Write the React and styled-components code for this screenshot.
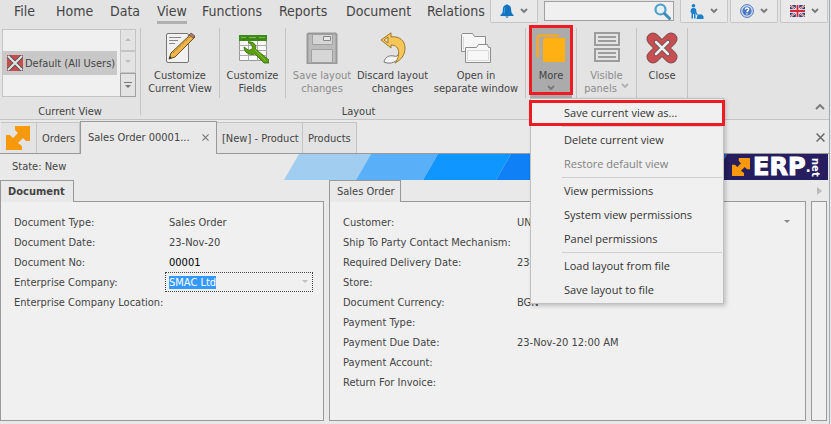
import React, { useEffect, useRef } from "react";
import styled, { createGlobalStyle, css } from "styled-components";

const GlobalStyle = createGlobalStyle`
  *, *::before, *::after { box-sizing: border-box; }
  body {
    margin: 0;
    background: #e9e9e9;
    color: #444;
    font: 11px/13px "DejaVu Sans Condensed", "DejaVu Sans", "Noto Sans", sans-serif;
  }
  button, input { font: inherit; color: inherit; margin: 0; padding: 0; border: 0; background: none; }
  button { cursor: pointer; }
  svg { display: block; flex: none; }
`;

const Window = styled.div`
  display: flex;
  flex-direction: column;
  min-height: 100vh;
  margin-right: 1px;
  border-right: 1px solid #a3a9b0;
`;

/* ---------- top bar ---------- */
const TopBar = styled.header`
  display: flex;
  align-items: flex-start;
  gap: 2px;
  height: 25px;
  padding-right: 1px;
  background: #e3e3e3;
`;

const MenuTabs = styled.nav`
  display: grid;
  grid-template-columns: 42px 54px 47px 45px 77px 67px 81px 61px;
  padding-left: 14px;
  font: 14px/21px "DejaVu Sans Condensed", "Noto Sans", sans-serif;
`;

const MenuTab = styled.button`
  justify-self: start;
  height: 24px;
  padding-top: 2px;
  line-height: 19px;
  white-space: nowrap;
  border-bottom: 3px solid ${(p) => (p.$active ? "#b0b0b0" : "transparent")};
`;

const ToolButton = styled.button`
  display: flex;
  flex: none;
  align-items: center;
  justify-content: center;
  gap: 6px;
  width: 48px;
  height: 23px;
  background: #e9e9e9;
  border: 1px solid #c6c6c6;
  border-top: 0;
  border-radius: 0 0 2px 2px;
`;

const SearchBox = styled.label`
  display: flex;
  flex: 1;
  align-items: center;
  min-width: 60px;
  height: 20px;
  margin: 1px 4px 0;
  padding-right: 2px;
  background: #f0f0f0;
  border: 1px solid #a0a0a0;
  input { flex: 1; width: 0; outline: 0; padding-left: 4px; }
`;

/* ---------- ribbon ---------- */
const Ribbon = styled.section`
  display: flex;
  height: 95px;
  background: #e3e3e3;
  border-bottom: 1px solid #c4c4c4;
`;

const Group = styled.div`
  position: relative;
  display: flex;
  flex-direction: column;
  width: ${(p) => p.$width}px;
`;

const GroupBody = styled.div`
  display: flex;
  height: 73px;
`;

const GroupLabel = styled.div`
  padding-top: 7px;
  text-align: center;
`;

const Divider = styled.div`
  flex: none;
  width: 1px;
  height: ${(p) => (p.$tall ? 87 : 70)}px;
  margin-top: 3px;
  background: #c4c4c4;
`;

const Gallery = styled.div`
  display: flex;
  flex: 1;
  height: 68px;
  margin: 4px 4px 0 2px;
  background: #f0f0f0;
  border: 1px solid #c4c4c4;
`;

const GalleryItem = styled.button`
  display: flex;
  align-items: center;
  gap: 2px;
  width: 114px;
  height: 24px;
  margin-top: 21px;
  padding-left: 4px;
  white-space: nowrap;
  background: #c8c8c8;
`;

const GallerySteps = styled.div`
  display: grid;
  grid-template-rows: 22px 22px 24px;
  width: 16px;
  margin: -1px -1px -1px auto;
`;

const GalleryStep = styled.button`
  display: grid;
  place-items: center;
  background: #e3e3e3;
  border: 1px solid ${(p) => (p.$strong ? "#a0a0a0" : "#c4c4c4")};
`;

const BigButton = styled.button`
  position: relative;
  display: flex;
  flex-direction: column;
  align-items: center;
  width: ${(p) => p.$width}px;
  height: 73px;
  padding-top: 7px;
  white-space: nowrap;
  background: ${(p) => (p.$pressed ? "#ababab" : "none")};
  color: ${(p) => (p.$muted ? "#8c8c8c" : "inherit")};
  svg:first-child { margin-bottom: 5px; }
`;

const highlight = css`
  &::after {
    content: "";
    position: absolute;
    inset: 0 -1px 3px -1px;
    border: 3px solid #ed1c24;
    pointer-events: none;
  }
`;

const MoreButton = styled(BigButton)`
  ${highlight}
  svg:last-child { margin-top: 3px; }
`;

const PanelsCaption = styled.span`
  display: flex;
  align-items: center;
  gap: 4px;
`;

const MoreSlot = styled.div`
  position: relative;
  margin: 0 4px;
`;

const Menu = styled.div`
  position: absolute;
  z-index: 2;
  top: 73px;
  left: 0;
  width: 194px;
  padding: 2px 1px 1px;
  background: #f0f0f0;
  border: 1px solid #c0c0c0;
  box-shadow: 2px 2px 4px rgba(0, 0, 0, 0.2);
  font: 11px/24px "Open Sans", "Noto Sans", sans-serif;
`;

const MenuItem = styled.button`
  position: relative;
  display: block;
  width: 100%;
  height: 24px;
  padding-left: 32px;
  text-align: left;
  white-space: nowrap;
  color: ${(p) => (p.$muted ? "#808080" : "#333")};
  ${(p) => p.$marked && css`
    ${highlight}
    &::after { inset: -1px -3px -1px -3px; }
  `}
`;

const MenuLine = styled.hr`
  height: 1px;
  margin: 1px 0 1px 30px;
  border: 0;
  background: #d0d0d0;
`;

const RibbonEnd = styled.div`
  display: flex;
  flex: 1;
  align-items: flex-end;
  justify-content: flex-end;
  padding: 0 4px 9px 0;
`;

/* ---------- document tabs ---------- */
const DocTabs = styled.div`
  display: flex;
  align-items: flex-end;
  height: 34px;
  padding-left: 1px;
  box-shadow: inset 0 -1px #999;
`;

const DocTab = styled.button`
  display: flex;
  align-items: center;
  justify-content: space-between;
  width: ${(p) => p.$width}px;
  height: 31px;
  padding: 0 4px 0 5px;
  white-space: nowrap;
  background: #e3e3e3;
  border: solid #c4c4c4;
  border-width: 1px 1px 0 0;
  margin-bottom: 1px;
  ${(p) => p.$active && css`
    height: 33px;
    margin: 0;
    padding: 0 7px 2px;
    background: #e9e9e9;
    border: 1px solid #999;
    border-bottom: 0;
  `}
`;

const CloseTabs = styled.button`
  display: grid;
  place-items: center;
  width: 17px;
  height: 17px;
  margin: 0 0 8px auto;
`;

/* ---------- state row ---------- */
const StateRow = styled.div`
  display: flex;
  height: 26px;
`;

const StateText = styled.div`
  width: 284px;
  padding: 6px 0 0 12px;
`;

const Banner = styled.div`
  display: flex;
  flex: 1;
  justify-content: flex-end;
  height: 26px;
  margin-right: 1px;
  overflow: hidden;
`;

const Stripes = styled.svg`
  flex: 1;
  height: 26px;
`;

const Brand = styled.div`
  display: flex;
  flex: none;
  align-items: center;
  width: 98px;
  padding-left: 2px;
  background: #261e5f;
  color: #fff;
  font: bold 24px/24px "DejaVu Sans", sans-serif;
  span { margin-left: 3px; -webkit-text-stroke: 1px #fff; }
  b { font-size: 14px; }
  small { writing-mode: vertical-rl; font-size: 10px; line-height: 8px; }
`;

/* ---------- panels ---------- */
const Panels = styled.main`
  display: grid;
  flex: 1;
  grid-template-columns: 324fr 477fr 16px;
  column-gap: 5px;
  padding: 0 2px 3px 0;
`;

const Panel = styled.section`
  display: flex;
  flex-direction: column;
  min-width: 0;
`;

const PanelHead = styled.div`
  display: flex;
  align-items: center;
  justify-content: ${(p) => (p.$end ? "center" : "flex-start")};
  height: 22px;
`;

const PanelTab = styled.h2`
  z-index: 1;
  width: ${(p) => p.$width}px;
  height: 22px;
  margin: 0;
  padding: 4px 0 0 7px;
  font-size: 11px;
  line-height: 13px;
  font-weight: ${(p) => (p.$bold ? "bold" : "normal")};
  background: #e9e9e9;
  border: 1px solid #999;
  border-bottom: 0;
`;

const PanelBody = styled.div`
  flex: 1;
  margin-top: -1px;
  padding: ${(p) => (p.$empty ? "0" : "10px 10px 20px 13px")};
  background: #f0f0f0;
  border: 1px solid #999;
`;

const Field = styled.div`
  display: grid;
  grid-template-columns: ${(p) => p.$labelWidth}px 1fr;
  align-items: center;
  height: 20px;
  label { white-space: nowrap; }
`;

const Value = styled.div`
  display: flex;
  align-items: center;
  height: 20px;
  padding: 0 4px 0 3px;
  border: 1px dotted ${(p) => (p.$focused ? "#444" : "transparent")};
  color: ${(p) => (p.$strong ? "#000" : "inherit")};
  input { flex: 1; width: 0; height: 14px; line-height: 13px; outline: 0; }
  input::selection { background: #3399ff; color: #fff; }
`;

const Chevron = ({ color = "#777" }) => (
  <svg width="8" height="6" viewBox="0 0 8 6" fill="none" stroke={color} strokeWidth="1.8">
    <path d="M1 1l3 3 3-3" />
  </svg>
);

const Caret = ({ up, color = "#888" }) => (
  <svg width="6" height="4" viewBox="0 0 6 4" fill={color}>
    <path d={up ? "M0 3h6L3 0z" : "M0 0h6L3 3z"} />
  </svg>
);

const Cross = ({ size = 7, color = "#777" }) => (
  <svg width={size} height={size} viewBox="0 0 8 8" stroke={color} strokeWidth="1.3">
    <path d="M.5.5l7 7M7.500.5l-7 7" />
  </svg>
);

const Arrows = ({ size }) => (
  <svg width={size} height={size} viewBox="0 0 24 24" fill="#f7990c">
    <path d="M9 0h15v15h-4l-3-3-5 5 4 3v4H0V9h4l3 3 5-5-3-3z" />
  </svg>
);

const BellIcon = () => (
  <svg width="14" height="14" viewBox="0 0 14 14" fill="#1273c0">
    <path d="M7 0l1 1c3 .6 3 3 3.200 5.500C11.400 9 12 9.500 13.500 11v1H.5v-1C2 9.500 2.600 9 2.800 6.500 3 4 3 1.600 6 1z" />
    <path d="M5 12.500h4L7 14z" />
    <path d="M5 3.500C4.300 5 4.500 7.500 4 9.500" stroke="#4ba3e3" fill="none" />
  </svg>
);

const SearchIcon = () => (
  <svg width="17" height="17" viewBox="0 0 17 17" fill="none">
    <circle cx="6.500" cy="6.500" r="5" fill="#e3f1f8" stroke="#4c9fc6" strokeWidth="2.200" />
    <path d="M10.500 10.500l5 5" stroke="#3d8db6" strokeWidth="3" strokeLinecap="round" />
  </svg>
);

const WorkerIcon = () => (
  <svg width="14" height="15" viewBox="0 0 14 15" fill="#1b7fc9">
    <circle cx="3.500" cy="1.800" r="1.800" />
    <path d="M1 5c1-1.500 4-1.500 5 0l.5 3.500L8 11l-1 .5L5.500 9v5.500H4V10H3v4.500H1.500V9L.5 8z" />
    <path d="M7 13l1-2.500h4l1.500 2V15H6.500z" />
  </svg>
);

const HelpIcon = () => (
  <svg width="14" height="14" viewBox="0 0 14 14" fill="none">
    <circle cx="7" cy="7" r="6.400" fill="#cfdcf0" stroke="#5077b8" />
    <circle cx="7" cy="7" r="4.600" fill="#4a78c4" />
    <path d="M5.300 5.600C5.300 3.500 8.800 3.600 8.700 5.500 8.600 6.600 7 6.700 7 8.200M7 9.200v1.300" stroke="#fff" strokeWidth="1.400" />
  </svg>
);

const FlagIcon = () => (
  <svg width="15" height="12" viewBox="0 0 15 12">
    <path d="M0 0h15v12H0z" fill="#31406f" />
    <path d="M0 0l15 12M15 0L0 12" stroke="#fff" strokeWidth="2" />
    <path d="M0 0l15 12M15 0L0 12" stroke="#c43545" />
    <path d="M7.500 0v12M0 6h15" stroke="#fff" strokeWidth="3.400" />
    <path d="M7.500 0v12M0 6h15" stroke="#d22b3c" strokeWidth="2" />
  </svg>
);

const DefaultIcon = () => (
  <svg width="16" height="16" viewBox="0 0 16 16">
    <path d="M0 0h16v16H0z" fill="#c94b50" />
    <path d="M1 1l14 14M15 1L1 15" stroke="#555" strokeWidth="4" />
    <path d="M1 1l14 14M15 1L1 15" stroke="#e5e5e5" strokeWidth="2" />
  </svg>
);

const NoteIcon = () => (
  <svg width="32" height="32" viewBox="0 0 32 32" fill="none">
    <rect x="2.500" y="1.500" width="22" height="29" rx="1.500" fill="#f1f1f1" stroke="#777" />
    <path d="M5 5.500h12M5 8.500h9M5 11.500h6" stroke="#888" />
    <path d="M27 2l4 3L11 25l-6 2 2-6z" fill="#efb64a" stroke="#695022" />
    <path d="M27 1l4 3-2 2-4-3z" fill="#b67a70" stroke="#5e4b37" strokeWidth=".7" />
    <path d="M9 21L26 5" stroke="#8e6c2d" strokeDasharray="1 1" />
    <path d="M5 27l1-3 2 2z" fill="#333" />
  </svg>
);

const FieldsIcon = () => (
  <svg width="32" height="32" viewBox="0 0 32 32" fill="none">
    <path d="M2.500 4.500h27v24h-27z" fill="#fafafa" stroke="#999" />
    <path d="M2 13.500h28M2 18.500h28M2 23.500h28M11.500 4v25M20.500 4v25" stroke="#aaa" />
    <path d="M2 3h28v6H2z" fill="#3f8a17" />
    <path d="M4 5.500h5M12 5.500h7M22 5.500h6" stroke="#79bb53" />
    <path d="M11 10c5-1 9 3 7.500 7L32 28v3h-5l-9-9c-6 2-11-2-11-7l5 3.500 3.500-2-.5-3z" fill="#5ca00f" stroke="#356c0a" strokeWidth=".8" />
    <path d="M18 18l11 11" stroke="#81c236" />
  </svg>
);

const SaveIcon = () => (
  <svg width="32" height="32" viewBox="0 0 32 32" fill="none" stroke="#a0a0a0">
    <path d="M2.500 1.500h27l1 1v29h-29v-29z" fill="#bcbcbc" stroke="#999" strokeWidth="2" />
    <path d="M6.500 2.500h20v10h-20zM5.500 17.500h21v13h-21z" fill="#d6d6d6" />
    <path d="M17.500 4.500h7v4h-7z" fill="#e8e8e8" stroke="#888" />
  </svg>
);

const UndoIcon = () => (
  <svg width="32" height="32" viewBox="0 0 32 32" strokeLinejoin="round">
    <path d="M7 30c1-5 5-7 10-6 2 1 4 0 5-3l3 1c-3 6-9 10-15 9z" fill="#f3f3f3" stroke="#777" />
    <path d="M4 8L14 .8v4C23 4 28 9 28 16c0 7-4 12-10 15 5-6 6-18-4-18v3z" fill="#f6c657" stroke="#9a7931" />
    <path d="M7 8l4-3v6z" fill="#f2e4c0" stroke="#9a7931" />
  </svg>
);

const FoldersIcon = () => (
  <svg width="32" height="32" viewBox="0 0 32 32" fill="#f7f7f7" stroke="#8d8d8d">
    <path d="M1.500 19.500v-17l1-1h10l2 3h11v15z" />
    <path d="M5.500 30.500v-15h11l2-3h9l1 3h2v15z" />
    <path d="M7.500 28.500v-10h21v10zM3.500 4.500v13" fill="none" stroke="#d8d8d8" />
  </svg>
);

const LayersIcon = () => (
  <svg width="32" height="32" viewBox="0 0 32 32" fill="none">
    <path d="M24 3.500H6C3.500 3.500 2.500 5 2.500 7v18.500" stroke="#e9a93b" strokeWidth="3" />
    <path d="M11 6h19v24H8V9c0-2 1-3 3-3z" fill="#ffb114" />
    <path d="M7.500 27V9c0-2 1.500-3.500 3.500-3.500h18" stroke="#b8a988" />
  </svg>
);

const PanelsIcon = () => (
  <svg width="32" height="32" viewBox="0 0 32 32" fill="none" stroke="#9c9c9c" strokeWidth="2">
    <path d="M4 1h24v12H4zM4 17h24v12H4zM7 5h18M7 9h18M7 21h18M7 25h18" />
  </svg>
);

const CloseIcon = () => (
  <svg width="32" height="32" viewBox="0 0 32 32" fill="none" strokeLinecap="round">
    <path d="M7 7l18 18M25 7L7 25" stroke="#805050" strokeWidth="13" />
    <path d="M7 7l18 18M25 7L7 25" stroke="#c84e51" strokeWidth="11" />
    <path d="M10 10l12 12M22 10L10 22" stroke="#6a5555" strokeWidth="4.500" />
    <path d="M10 10l12 12M22 10L10 22" stroke="#eee" strokeWidth="2.500" />
  </svg>
);

const MENU_TABS = ["File", "Home", "Data", "View", "Functions", "Reports", "Document", "Relations"];

const DOCUMENT_FIELDS = [
  { label: "Document Type:", value: "Sales Order" },
  { label: "Document Date:", value: "23-Nov-20" },
  { label: "Document No:", value: "00001", strong: true },
  { label: "Enterprise Company:", value: "SMAC Ltd", focused: true, caret: "#c0c0c0" },
  { label: "Enterprise Company Location:", value: "" },
];

const ORDER_FIELDS = [
  { label: "Customer:", value: "UN", caret: "#888" },
  { label: "Ship To Party Contact Mechanism:", value: "" },
  { label: "Required Delivery Date:", value: "23-Nov-20" },
  { label: "Store:", value: "" },
  { label: "Document Currency:", value: "BGN" },
  { label: "Payment Type:", value: "" },
  { label: "Payment Due Date:", value: "23-Nov-20 12:00 AM" },
  { label: "Payment Account:", value: "" },
  { label: "Return For Invoice:", value: "" },
];

function FieldRow({ label, value, strong, focused, caret, labelWidth }) {
  const input = useRef(null);
  const id = label.replace(/\W+/g, "-").toLowerCase();
  useEffect(() => {
    if (focused) {
      input.current.focus();
      input.current.select();
    }
  }, [focused]);
  return (
    <Field $labelWidth={labelWidth}>
      <label htmlFor={id}>{label}</label>
      <Value $focused={focused} $strong={strong}>
        <input id={id} ref={input} defaultValue={value} spellCheck={false} />
        {caret && <button aria-label={`Choose ${label}`}><Caret color={caret} /></button>}
      </Value>
    </Field>
  );
}

function MoreMenu() {
  return (
    <Menu role="menu">
      <MenuItem role="menuitem" $marked>Save current view as...</MenuItem>
      <MenuLine />
      <MenuItem role="menuitem">Delete current view</MenuItem>
      <MenuItem role="menuitem" $muted disabled>Restore default view</MenuItem>
      <MenuLine />
      <MenuItem role="menuitem">View permissions</MenuItem>
      <MenuItem role="menuitem">System view permissions</MenuItem>
      <MenuItem role="menuitem">Panel permissions</MenuItem>
      <MenuLine />
      <MenuItem role="menuitem">Load layout from file</MenuItem>
      <MenuItem role="menuitem">Save layout to file</MenuItem>
    </Menu>
  );
}

export default function App() {
  return (
    <Window>
      <GlobalStyle />
      <TopBar>
        <MenuTabs>
          {MENU_TABS.map((name) => (
            <MenuTab key={name} $active={name === "View"}>{name}</MenuTab>
          ))}
        </MenuTabs>
        <ToolButton aria-label="Notifications"><BellIcon /><Chevron /></ToolButton>
        <SearchBox>
          <input type="text" aria-label="Search" />
          <SearchIcon />
        </SearchBox>
        <ToolButton aria-label="User"><WorkerIcon /><Chevron /></ToolButton>
        <ToolButton aria-label="Help"><HelpIcon /><Chevron /></ToolButton>
        <ToolButton aria-label="Language"><FlagIcon /><Chevron /></ToolButton>
      </TopBar>

      <Ribbon>
        <Group $width={140}>
          <GroupBody>
            <Gallery>
              <GalleryItem><DefaultIcon />Default (All Users)</GalleryItem>
              <GallerySteps>
                <GalleryStep aria-label="Previous"><Caret up color="#bbb" /></GalleryStep>
                <GalleryStep aria-label="Next"><Caret color="#bbb" /></GalleryStep>
                <GalleryStep aria-label="Show all" $strong>
                  <svg width="8" height="7" viewBox="0 0 8 7" fill="#777"><path d="M0 0h8v1H0zM1 3h6L4 6z" /></svg>
                </GalleryStep>
              </GallerySteps>
            </Gallery>
          </GroupBody>
          <GroupLabel>Current View</GroupLabel>
        </Group>
        <Divider $tall />
        <Group $width={435}>
          <GroupBody>
            <BigButton $width={78}><NoteIcon />Customize<br />Current View</BigButton>
            <Divider />
            <BigButton $width={65}><FieldsIcon />Customize<br />Fields</BigButton>
            <Divider />
            <BigButton $width={72} $muted disabled><SaveIcon />Save layout<br />changes</BigButton>
            <BigButton $width={69}><UndoIcon />Discard layout<br />changes</BigButton>
            <BigButton $width={98}><FoldersIcon />Open in<br />separate window</BigButton>
            <Divider />
            <MoreSlot>
              <MoreButton $width={42} $pressed aria-haspopup="menu" aria-expanded="true">
                <LayersIcon />More<Chevron />
              </MoreButton>
              <MoreMenu />
            </MoreSlot>
          </GroupBody>
          <GroupLabel>Layout</GroupLabel>
        </Group>
        <Divider />
        <BigButton $width={59} $muted disabled>
          <PanelsIcon />Visible
          <PanelsCaption>panels <Chevron color="#b0b0b0" /></PanelsCaption>
        </BigButton>
        <Divider />
        <BigButton $width={50}><CloseIcon />Close</BigButton>
        <Divider />
        <RibbonEnd>
          <button aria-label="Collapse ribbon">
            <svg width="10" height="7" viewBox="0 0 10 7" fill="none" stroke="#777" strokeWidth="1.800"><path d="M1 6l4-4 4 4" /></svg>
          </button>
        </RibbonEnd>
      </Ribbon>

      <DocTabs role="tablist">
        <DocTab role="tab" $width={36} aria-label="Start"><Arrows size={24} /></DocTab>
        <DocTab role="tab" $width={43}>Orders</DocTab>
        <DocTab role="tab" $width={137} $active aria-selected="true">Sales Order 00001...<Cross /></DocTab>
        <DocTab role="tab" $width={86}>[New] - Product</DocTab>
        <DocTab role="tab" $width={54}>Products</DocTab>
        <CloseTabs aria-label="Close tab"><Cross size={9} color="#666" /></CloseTabs>
      </DocTabs>

      <StateRow>
        <StateText>State: New</StateText>
        <Banner>
          <Stripes viewBox="0 0 446 26" preserveAspectRatio="none">
            <path d="M15 0h72L72 26H0z" fill="#a1cdf1" />
            <path d="M87 0h67l-15 26H72z" fill="#59aff8" />
            <path d="M154 0h73l-15 26h-73z" fill="#1096ff" />
            <path d="M227 0h108l-15 26H212z" fill="#0f80f5" />
            <path d="M335 0h108l-15 26H320z" fill="#1767c4" />
            <path d="M443 0h4v26h-19z" fill="#261e5f" />
          </Stripes>
          <Brand><Arrows size={18} /><span>ERP</span><b>.</b><small>net</small></Brand>
        </Banner>
      </StateRow>

      <Panels>
        <Panel>
          <PanelHead><PanelTab $width={74} $bold>Document</PanelTab></PanelHead>
          <PanelBody>
            {DOCUMENT_FIELDS.map((f) => <FieldRow key={f.label} labelWidth={151} {...f} />)}
          </PanelBody>
        </Panel>
        <Panel>
          <PanelHead><PanelTab $width={72}>Sales Order</PanelTab></PanelHead>
          <PanelBody>
            {ORDER_FIELDS.map((f) => <FieldRow key={f.label} labelWidth={170} {...f} />)}
          </PanelBody>
        </Panel>
        <Panel>
          <PanelHead $end>
            <button aria-label="Next panels">
              <svg width="5" height="8" viewBox="0 0 5 8" fill="#bbb"><path d="M0 0l5 4-5 4z" /></svg>
            </button>
          </PanelHead>
          <PanelBody $empty />
        </Panel>
      </Panels>
    </Window>
  );
}
